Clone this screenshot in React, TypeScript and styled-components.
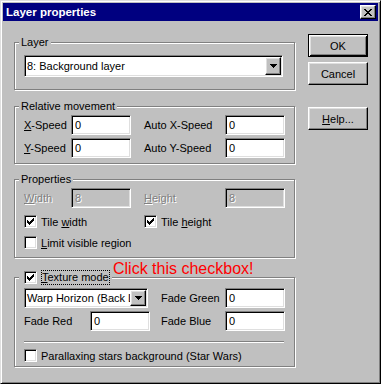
import React from "react";
import styled, { createGlobalStyle, css } from "styled-components";

const GlobalStyle = createGlobalStyle`
  html, body {
    margin: 0;
    padding: 0;
    background: #c0c0c0;
  }
  body {
    font-family: "Liberation Sans", Arial, sans-serif;
    font-size: 11px;
    color: #000;
  }
`;

const raised = css`
  border: 1px solid;
  border-color: #fff #000 #000 #fff;
  box-shadow: inset -1px -1px #808080, inset 1px 1px #dfdfdf;
`;

const sunken = css`
  border: 1px solid;
  border-color: #808080 #fff #fff #808080;
  box-shadow: inset 1px 1px #000, inset -1px -1px #dfdfdf;
`;

const Window = styled.div`
  box-sizing: border-box;
  width: 381px;
  height: 384px;
  padding: 2px;
  background: #c0c0c0;
  border: 1px solid;
  border-color: #dfdfdf #000 #000 #dfdfdf;
  box-shadow: inset 1px 1px #fff, inset -1px -1px #808080;
  display: flex;
  flex-direction: column;
`;

const TitleBar = styled.div`
  height: 18px;
  flex: none;
  display: flex;
  align-items: center;
  justify-content: space-between;
  padding: 0 2px 0 3px;
  background: #000080;
  color: #fff;
  font-weight: bold;
  font-size: 11.5px;
`;

const CloseButton = styled.span`
  box-sizing: border-box;
  width: 16px;
  height: 14px;
  background: #c0c0c0;
  ${raised}
  display: flex;
  align-items: center;
  justify-content: center;
`;

const Client = styled.div`
  display: flex;
  gap: 12px;
  padding: 13px 0 0 11px;
`;

const Groups = styled.div`
  width: 282px;
  padding-top: 2px;
  display: flex;
  flex-direction: column;
`;

const Group = styled.fieldset<{ $h: number; $mt?: number }>`
  box-sizing: border-box;
  width: 281px;
  height: ${(p) => p.$h}px;
  min-width: 0;
  margin: ${(p) => p.$mt ?? 0}px 0 0 0;
  padding: 0;
  border: 1px solid #808080;
  box-shadow: 1px 1px 0 #fff, inset 1px 1px 0 #fff;
`;

const Legend = styled.legend`
  position: relative;
  margin-left: 4px;
  padding: 0 2px;
  line-height: 13px;
  background: #c0c0c0;
`;

const GroupBody = styled.div<{ $pt: number }>`
  padding: ${(p) => p.$pt}px 0 0 9px;
`;

const FieldGrid = styled.div<{ $cols: string; $gap: number }>`
  display: grid;
  grid-template-columns: ${(p) => p.$cols};
  row-gap: ${(p) => p.$gap}px;
  align-items: center;
`;

const Label = styled.span<{ $disabled?: boolean }>`
  white-space: nowrap;
  ${(p) =>
    p.$disabled &&
    css`
      color: #808080;
      text-shadow: 1px 1px 0 #fff;
    `}
`;

const TextBox = styled.input`
  box-sizing: border-box;
  width: 60px;
  height: 20px;
  margin: 0;
  padding: 0 3px;
  ${sunken}
  background: #fff;
  font: inherit;
  color: #000;
  outline: none;

  &:disabled {
    background: #c0c0c0;
    color: #808080;
    -webkit-text-fill-color: #808080;
    text-shadow: 1px 1px 0 #fff;
  }
`;

const Combo = styled.div<{ $w: number; $h: number }>`
  box-sizing: border-box;
  width: ${(p) => p.$w}px;
  height: ${(p) => p.$h}px;
  padding: 1px;
  ${sunken}
  background: #fff;
  display: flex;
  align-items: center;
  grid-column: 1 / span 2;
`;

const ComboText = styled.span`
  flex: 1;
  min-width: 0;
  padding-left: 1px;
  white-space: nowrap;
  overflow: hidden;
`;

const DropButton = styled.span`
  box-sizing: border-box;
  width: 16px;
  align-self: stretch;
  flex: none;
  background: #c0c0c0;
  ${raised}
  display: flex;
  align-items: center;
  justify-content: center;
`;

const CheckRow = styled.label<{ $col?: string; $mt?: number }>`
  height: 15px;
  display: flex;
  align-items: center;
  gap: 4px;
  grid-column: ${(p) => p.$col ?? "auto"};
  margin-top: ${(p) => p.$mt ?? 0}px;
  white-space: nowrap;
`;

const CheckBox = styled.span`
  box-sizing: border-box;
  width: 13px;
  height: 13px;
  flex: none;
  ${sunken}
  background: #fff;
  display: flex;
  align-items: center;
  justify-content: center;
`;

const FocusLabel = styled.span`
  border: 1px dotted #000;
  line-height: 13px;
`;

const LegendRow = styled.div`
  display: flex;
  align-items: center;
  gap: 4px;
  padding-left: 3px;
  height: 15px;
`;

const Annotation = styled.span`
  position: absolute;
  left: 94px;
  top: -10px;
  color: #ff0000;
  font-size: 16px;
  line-height: 18px;
  white-space: nowrap;
`;

const Separator = styled.div`
  width: 260px;
  margin-top: 10px;
  border-top: 1px solid #808080;
  border-bottom: 1px solid #fff;
`;

const Buttons = styled.div`
  width: 60px;
  display: flex;
  flex-direction: column;
  gap: 5px;
`;

const Button = styled.button<{ $default?: boolean; $mt?: number }>`
  box-sizing: border-box;
  width: 60px;
  height: 23px;
  margin: ${(p) => p.$mt ?? 0}px 0 0 0;
  padding: 0;
  background: #c0c0c0;
  font: inherit;
  color: #000;
  ${raised}
  ${(p) =>
    p.$default &&
    css`
      border-color: #000;
      box-shadow: inset 1px 1px #fff, inset -1px -1px #000,
        inset 2px 2px #dfdfdf, inset -2px -2px #808080;
    `}
`;

// tiny bitmap glyphs, one string per pixel row
function Pixels({ rows }: { rows: string[] }) {
  const w = rows[0].length;
  return (
    <svg width={w} height={rows.length} viewBox={`0 0 ${w} ${rows.length}`} shapeRendering="crispEdges">
      {rows.flatMap((row, y) =>
        row.split("").map((c, x) => (c === "X" ? <rect key={`${x}-${y}`} x={x} y={y} width={1} height={1} fill="#000" /> : null))
      )}
    </svg>
  );
}

const CLOSE = ["XX....XX", ".XX..XX.", "..XXXX..", "...XX...", "..XXXX..", ".XX..XX.", "XX....XX"];
const CHECK = ["......X", ".....XX", "X...XXX", "XX.XXX.", "XXXXX..", ".XXX...", "..X...."];
const ARROW = ["XXXXXXX", ".XXXXX.", "..XXX..", "...X..."];

function Check({ checked, children, col, mt }: { checked?: boolean; children: React.ReactNode; col?: string; mt?: number }) {
  return (
    <CheckRow $col={col} $mt={mt}>
      <CheckBox>{checked && <Pixels rows={CHECK} />}</CheckBox>
      <span>{children}</span>
    </CheckRow>
  );
}

function Dropdown({ value, w, h }: { value: string; w: number; h: number }) {
  return (
    <Combo $w={w} $h={h}>
      <ComboText>{value}</ComboText>
      <DropButton>
        <Pixels rows={ARROW} />
      </DropButton>
    </Combo>
  );
}

export default function App() {
  return (
    <>
      <GlobalStyle />
      <Window>
        <TitleBar>
          <span>Layer properties</span>
          <CloseButton>
            <Pixels rows={CLOSE} />
          </CloseButton>
        </TitleBar>

        <Client>
          <Groups>
            <Group $h={54}>
              <Legend>Layer</Legend>
              <GroupBody $pt={6}>
                <Dropdown value="8: Background layer" w={259} h={22} />
              </GroupBody>
            </Group>

            <Group $h={64} $mt={10}>
              <Legend>Relative movement</Legend>
              <GroupBody $pt={2}>
                <FieldGrid $cols="47px 60px 13px 81px 60px" $gap={3}>
                  <Label><u>X</u>-Speed</Label>
                  <TextBox defaultValue="0" />
                  <span />
                  <Label>Auto X-Speed</Label>
                  <TextBox defaultValue="0" />
                  <Label><u>Y</u>-Speed</Label>
                  <TextBox defaultValue="0" />
                  <span />
                  <Label>Auto Y-Speed</Label>
                  <TextBox defaultValue="0" />
                </FieldGrid>
              </GroupBody>
            </Group>

            <Group $h={85} $mt={9}>
              <Legend>Properties</Legend>
              <GroupBody $pt={2}>
                <FieldGrid $cols="47px 60px 13px 81px 60px" $gap={6}>
                  <Label $disabled><u>W</u>idth</Label>
                  <TextBox defaultValue="8" disabled />
                  <span />
                  <Label $disabled><u>H</u>eight</Label>
                  <TextBox defaultValue="8" disabled />
                  <Check checked col="1 / span 2">
                    Tile <u>w</u>idth
                  </Check>
                  <Check checked col="4 / span 2">
                    Tile <u>h</u>eight
                  </Check>
                  <Check col="1 / -1">
                    <u>L</u>imit visible region
                  </Check>
                </FieldGrid>
              </GroupBody>
            </Group>

            <Group $h={97} $mt={12}>
              <Legend>
                <LegendRow>
                  <CheckBox>
                    <Pixels rows={CHECK} />
                  </CheckBox>
                  <FocusLabel>
                    <u>T</u>exture mode
                  </FocusLabel>
                </LegendRow>
                <Annotation>Click this checkbox!</Annotation>
              </Legend>
              <GroupBody $pt={3}>
                <FieldGrid $cols="66px 60px 11px 64px 60px" $gap={3}>
                  <Dropdown value="Warp Horizon (Back L" w={124} h={20} />
                  <span />
                  <Label>Fade Green</Label>
                  <TextBox defaultValue="0" />
                  <Label>Fade Red</Label>
                  <TextBox defaultValue="0" />
                  <span />
                  <Label>Fade Blue</Label>
                  <TextBox defaultValue="0" />
                </FieldGrid>
                <Separator />
                <Check mt={5}>Parallaxing stars background (Star Wars)</Check>
              </GroupBody>
            </Group>
          </Groups>

          <Buttons>
            <Button $default>OK</Button>
            <Button>Cancel</Button>
            <Button $mt={17}>
              <u>H</u>elp...
            </Button>
          </Buttons>
        </Client>
      </Window>
    </>
  );
}
